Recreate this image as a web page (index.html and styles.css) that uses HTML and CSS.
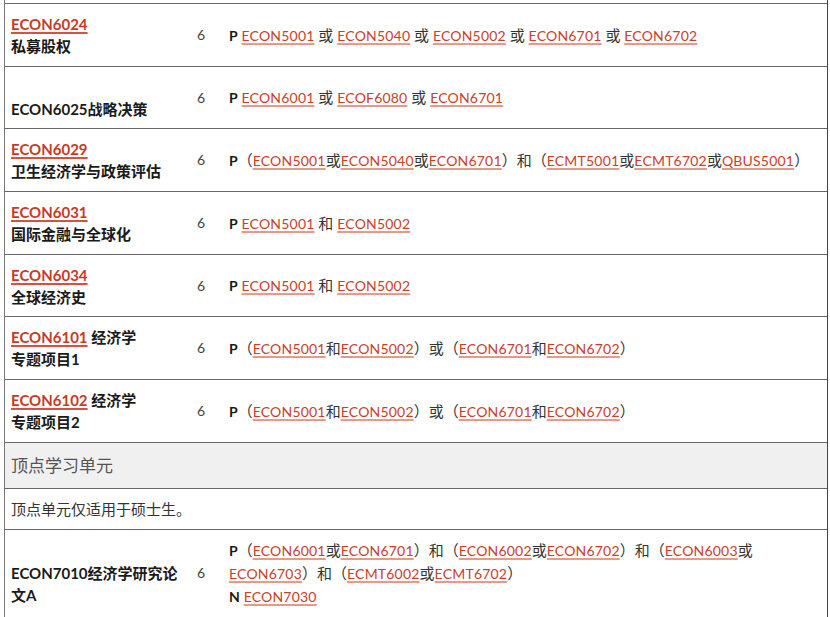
FILE: index.html
```html
<!DOCTYPE html>
<html lang="zh">
<head>
<meta charset="utf-8">
<title>Units</title>
<link rel="stylesheet" href="styles.css">
</head>
<body>
<div class="frame">
<table class="units">
  <colgroup><col class="c-name"><col class="c-cp"><col class="c-req"></colgroup>
  <tr class="r2">
    <td class="name"><a href="#">ECON6024</a><br>私募股权</td>
    <td class="cp">6</td>
    <td class="req"><b>P</b> <a href="#">ECON5001</a> 或 <a href="#">ECON5040</a> 或 <a href="#">ECON5002</a> 或 <a href="#">ECON6701</a> 或 <a href="#">ECON6702</a></td>
  </tr>
  <tr class="r2">
    <td class="name"><br>ECON6025战略决策</td>
    <td class="cp">6</td>
    <td class="req"><b>P</b> <a href="#">ECON6001</a> 或 <a href="#">ECOF6080</a> 或 <a href="#">ECON6701</a></td>
  </tr>
  <tr class="r2">
    <td class="name"><a href="#">ECON6029</a><br>卫生经济学与政策评估</td>
    <td class="cp">6</td>
    <td class="req"><b>P</b>（<a href="#">ECON5001</a>或<a href="#">ECON5040</a>或<a href="#">ECON6701</a>）和（<a href="#">ECMT5001</a>或<a href="#">ECMT6702</a>或<a href="#">QBUS5001</a>）</td>
  </tr>
  <tr class="r2">
    <td class="name"><a href="#">ECON6031</a><br>国际金融与全球化</td>
    <td class="cp">6</td>
    <td class="req"><b>P</b> <a href="#">ECON5001</a> 和 <a href="#">ECON5002</a></td>
  </tr>
  <tr class="r2">
    <td class="name"><a href="#">ECON6034</a><br>全球经济史</td>
    <td class="cp">6</td>
    <td class="req"><b>P</b> <a href="#">ECON5001</a> 和 <a href="#">ECON5002</a></td>
  </tr>
  <tr class="r2">
    <td class="name"><a href="#">ECON6101</a> 经济学<br>专题项目1</td>
    <td class="cp">6</td>
    <td class="req"><b>P</b>（<a href="#">ECON5001</a>和<a href="#">ECON5002</a>）或（<a href="#">ECON6701</a>和<a href="#">ECON6702</a>）</td>
  </tr>
  <tr class="r2">
    <td class="name"><a href="#">ECON6102</a> 经济学<br>专题项目2</td>
    <td class="cp">6</td>
    <td class="req"><b>P</b>（<a href="#">ECON5001</a>和<a href="#">ECON5002</a>）或（<a href="#">ECON6701</a>和<a href="#">ECON6702</a>）</td>
  </tr>
  <tr class="section">
    <td colspan="3">顶点学习单元</td>
  </tr>
  <tr class="note">
    <td colspan="3">顶点单元仅适用于硕士生。</td>
  </tr>
  <tr class="r3">
    <td class="name"><br>ECON7010经济学研究论<br>文A</td>
    <td class="cp">6</td>
    <td class="req"><b>P</b>（<a href="#">ECON6001</a>或<a href="#">ECON6701</a>）和（<a href="#">ECON6002</a>或<a href="#">ECON6702</a>）和（<a href="#">ECON6003</a>或<br><a href="#">ECON6703</a>）和（<a href="#">ECMT6002</a>或<a href="#">ECMT6702</a>）<br><b>N</b> <a href="#">ECON7030</a></td>
  </tr>
</table>
</div>
</body>
</html>
```

FILE: styles.css
```css
html, body {
  margin: 0;
  padding: 0;
  background: #ffffff;
}
body {
  font-family: Lato, "Noto Sans CJK SC", sans-serif;
  color: #222;
  width: 830px;
  height: 617px;
  overflow: hidden;
}
.frame {
  margin-left: 4px;
  width: 822px;
  border-left: 1px solid #777;
  border-right: 1px solid #444;
  padding-top: 3px;
}
.units {
  width: 822px;
  border-collapse: collapse;
  table-layout: fixed;
}
.c-name { width: 186px; }
.c-cp { width: 32px; }
.units td {
  border-top: 1px solid #666;
  border-bottom: 1px solid #666;
  padding: 9px 7px 8.7px 6px;
  vertical-align: middle;
  line-height: 22px;
  font-size: 14px;
}
.units td.name {
  font-weight: 700;
  font-size: 15px;
  color: #1a1a1a;
  white-space: nowrap;
}
.units td.cp {
  color: #444;
  font-size: 14px;
}
.units td.req {
  color: #333;
  font-size: 15px;
  white-space: nowrap;
}
.units td.req b {
  color: #1a1a1a;
  font-weight: 700;
  font-size: 14px;
}
.units a {
  color: #c8412b;
  font-size: 14px;
  letter-spacing: 0.2px;
  text-decoration: underline;
  text-decoration-color: #e79a8a;
  text-decoration-thickness: 1.5px;
  text-underline-offset: 2px;
}
.units td.name a {
  color: #c93a26;
  font-size: 15px;
  letter-spacing: 0;
  text-decoration-color: #d4523e;
}
.r2 td { height: 44px; }
.r3 td { height: 66px; }
.section td {
  background: #f0f0f0;
  color: #555;
  font-size: 17px;
  padding: 10px 7px 10px 6px;
  line-height: 25px;
}
.note td {
  color: #333;
  font-size: 15px;
  padding: 9px 7px 9px 6px;
}
```
